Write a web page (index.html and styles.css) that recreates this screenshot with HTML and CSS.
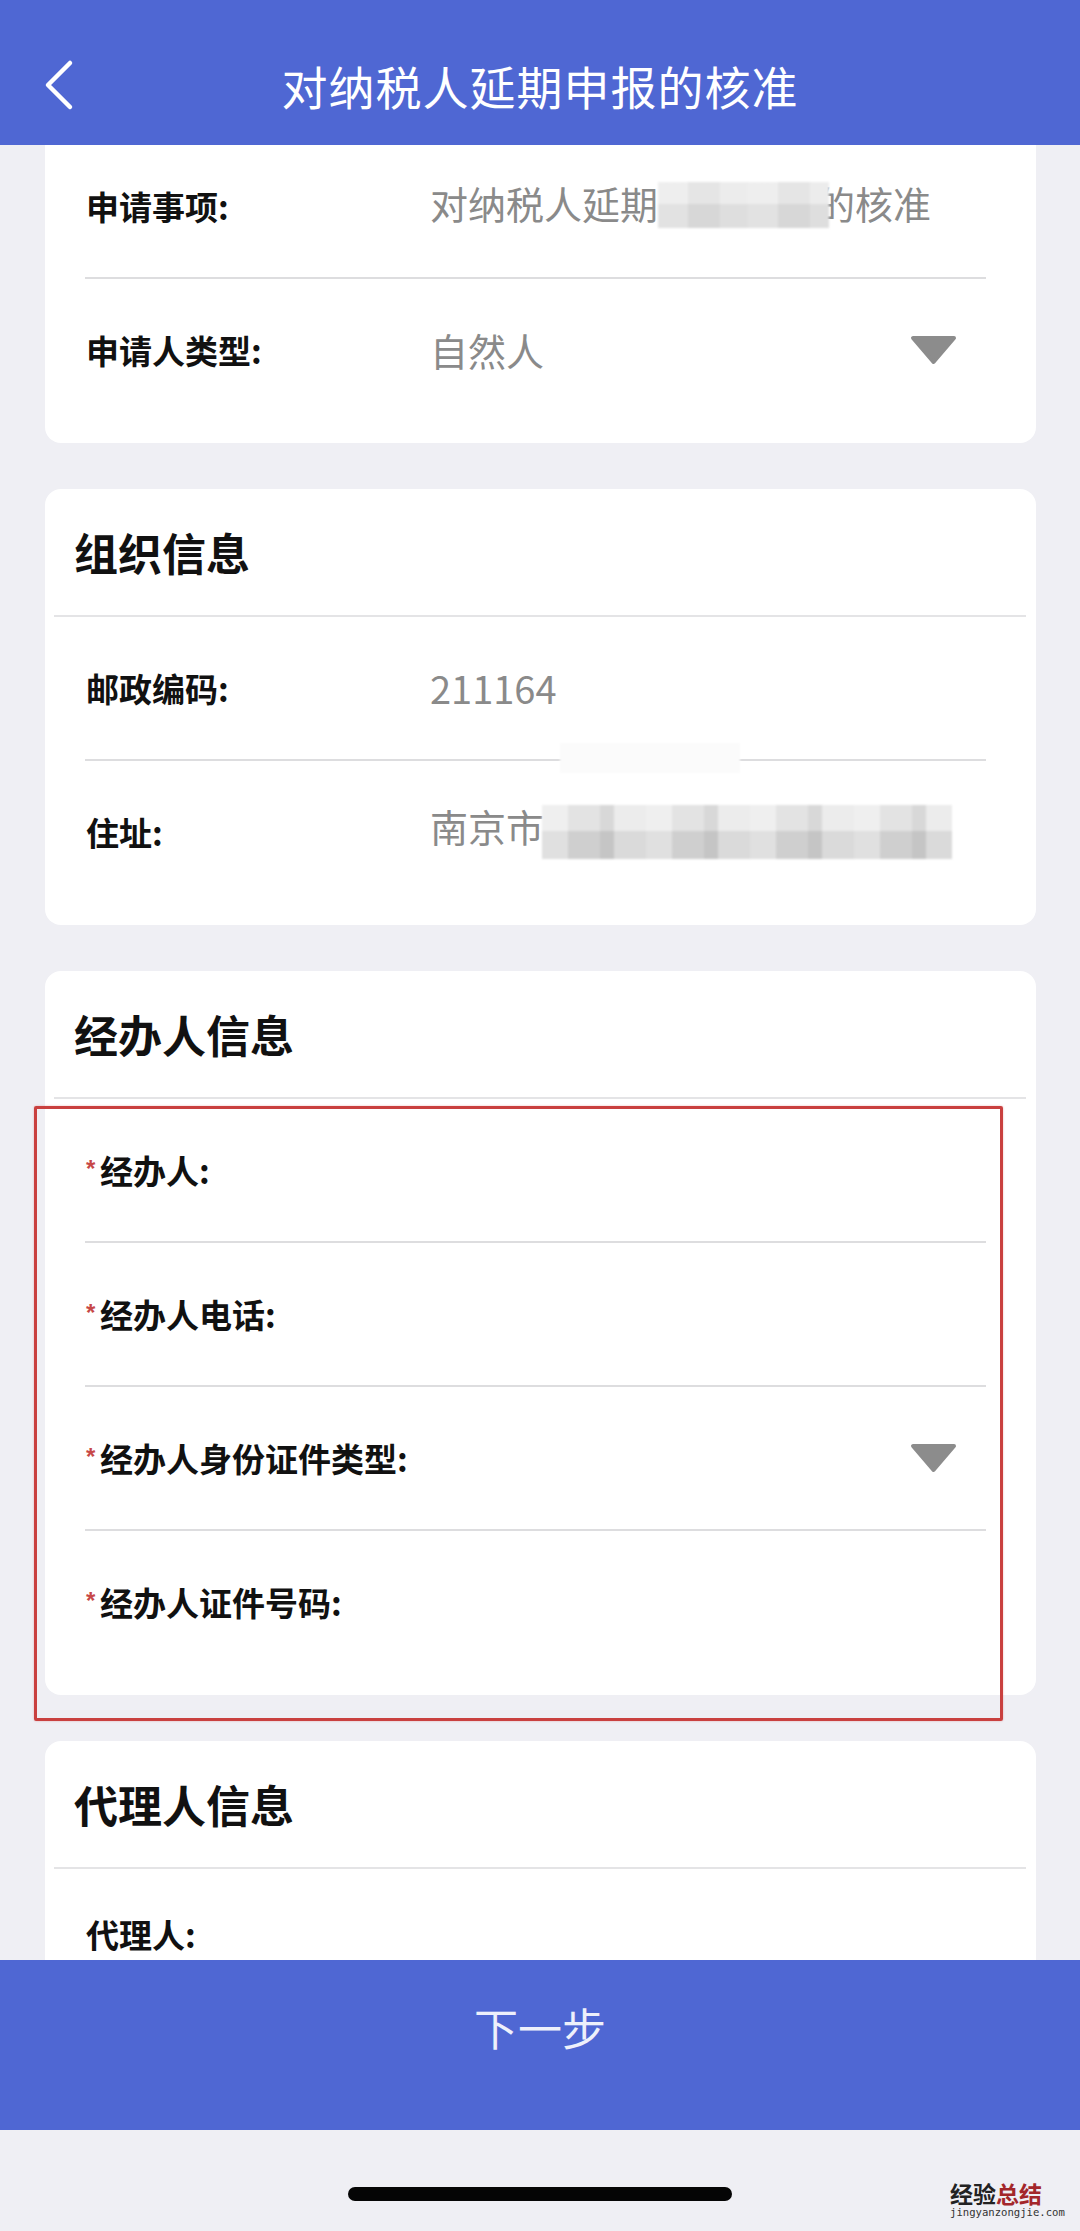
FILE: index.html
```html
<!DOCTYPE html>
<html lang="zh-CN">
<head>
<meta charset="utf-8">
<title>对纳税人延期申报的核准</title>
<link rel="stylesheet" href="styles.css">
</head>
<body>
<div class="screen">
  <header class="nav">
    <svg class="back" width="34" height="52" viewBox="0 0 34 52">
      <polyline points="27,4 5,26 27,48" fill="none" stroke="#ffffff" stroke-width="4.5" stroke-linecap="round" stroke-linejoin="round"/>
    </svg>
    <h1 class="nav-title">对纳税人延期申报的核准</h1>
    <span></span>
  </header>

  <main class="content">
    <section class="card card-first">
      <div class="field">
        <span class="label">申请事项:</span>
        <span class="value">对纳税人延期<span class="mask mask-item"></span>的核准</span>
      </div>
      <div class="field field-last">
        <span class="label">申请人类型:</span>
        <span class="value">自然人</span>
        <svg class="caret" width="47" height="30" viewBox="0 0 47 30"><polygon points="3,3 44,3 23.5,27" fill="#8c8c8c" stroke="#8c8c8c" stroke-width="4" stroke-linejoin="round"/></svg>
      </div>
    </section>

    <section class="card">
      <h2 class="card-head">组织信息</h2>
      <div class="field field-zip">
        <span class="label">邮政编码:</span>
        <span class="value">211164</span>
      </div>
      <div class="field field-last">
        <span class="label">住址:</span>
        <span class="value">南京市<span class="mask mask-addr"></span></span>
      </div>
    </section>

    <section class="card">
      <h2 class="card-head">经办人信息</h2>
      <div class="field">
        <span class="label"><span class="req">*</span>经办人:</span>
      </div>
      <div class="field">
        <span class="label"><span class="req">*</span>经办人电话:</span>
      </div>
      <div class="field">
        <span class="label label-wide"><span class="req">*</span>经办人身份证件类型:</span>
        <svg class="caret" width="47" height="30" viewBox="0 0 47 30"><polygon points="3,3 44,3 23.5,27" fill="#8c8c8c" stroke="#8c8c8c" stroke-width="4" stroke-linejoin="round"/></svg>
      </div>
      <div class="field field-last">
        <span class="label"><span class="req">*</span>经办人证件号码:</span>
      </div>
      <div class="highlight"></div>
    </section>

    <section class="card card-partial">
      <h2 class="card-head">代理人信息</h2>
      <div class="field field-agent">
        <span class="label">代理人:</span>
      </div>
    </section>
  </main>

  <footer class="action-bar">
    <span class="action-text">下一步</span>
  </footer>
  <div class="home-area">
    <div class="home-indicator"></div>
  </div>

  <div class="watermark">
    <div class="wm-cn"><span class="wm-dark">经验</span><span class="wm-red">总结</span></div>
    <div class="wm-en">jingyanzongjie.com</div>
  </div>
</div>
</body>
</html>
```

FILE: styles.css
```css
* { box-sizing: border-box; }

html, body {
  margin: 0;
  padding: 0;
}

body {
  width: 1080px;
  height: 2231px;
  overflow: hidden;
  background: #efeff4;
  font-family: "Noto Sans CJK SC", "Noto Sans", sans-serif;
  color: #111111;
}

.screen {
  position: relative;
  width: 1080px;
  height: 2231px;
  display: flex;
  flex-direction: column;
}

/* ---------- navigation bar ---------- */
.nav {
  flex: none;
  height: 145px;
  padding-top: 25px;
  background: #4f67d3;
  display: grid;
  grid-template-columns: 1fr auto 1fr;
  align-items: center;
}

.back {
  margin-left: 43px;
  display: block;
}

.nav-title {
  margin: 0;
  font-size: 46px;
  font-weight: 400;
  line-height: 1;
  color: #ffffff;
  letter-spacing: 1px;
}

/* ---------- content ---------- */
.content {
  flex: 1;
  min-height: 0;
  overflow: hidden;
}

.card {
  position: relative;
  background: #ffffff;
  border-radius: 16px;
  margin: 0 44px 46px 45px;
  padding-bottom: 22px;
}

.card-first {
  margin-top: -10px;
  border-top-left-radius: 0;
  border-top-right-radius: 0;
}

.card-partial {
  padding-bottom: 60px;
  border-bottom-left-radius: 0;
  border-bottom-right-radius: 0;
}

.card-head {
  margin: 0 10px 0 9px;
  height: 128px;
  padding-left: 20px;
  border-bottom: 2px solid #e4e4e6;
  display: flex;
  align-items: center;
  font-size: 44px;
  font-weight: 700;
  line-height: 1;
  color: #111111;
}

.field {
  margin: 0 50px 0 40px;
  height: 144px;
  border-bottom: 2px solid #dddddf;
  display: grid;
  grid-template-columns: 345px 1fr auto;
  align-items: center;
}

.field-last {
  border-bottom: none;
  height: 142px;
}

.field-agent {
  border-bottom: none;
  height: 90px;
  align-items: end;
  padding-bottom: 8px;
}

.label {
  grid-column: 1;
  padding-left: 1px;
  font-size: 33px;
  font-weight: 700;
  line-height: 1;
  color: #111111;
  white-space: nowrap;
}

.label-wide {
  grid-column: 1 / 3;
}

.req {
  display: inline-block;
  width: 14px;
  font-family: "Liberation Sans", sans-serif;
  font-size: 24px;
  font-weight: 700;
  color: #c74848;
  vertical-align: 7px;
}

.value {
  grid-column: 2;
  font-size: 38px;
  font-weight: 400;
  line-height: 1;
  color: #8a8a8a;
  white-space: nowrap;
}

.caret {
  grid-column: 3;
  display: block;
  margin-right: 29px;
}

/* mosaic privacy masks */
.mask {
  display: inline-block;
  vertical-align: middle;
  background-image:
    repeating-linear-gradient(90deg, rgba(255,255,255,0.18) 0 30px, rgba(0,0,0,0.025) 30px 62px, rgba(255,255,255,0.08) 62px 90px),
    linear-gradient(180deg, #ebebeb 0 48%, #dcdcdc 48% 100%);
  position: relative;
  z-index: 1;
}

.mask-item {
  width: 171px;
  height: 46px;
  margin-right: -12px;
  margin-top: -6px;
  filter: blur(1px);
}

.mask-addr {
  width: 410px;
  height: 54px;
  margin-left: -2px;
  filter: blur(1px);
  background-image:
    repeating-linear-gradient(90deg, rgba(255,255,255,0.25) 0 26px, rgba(0,0,0,0.03) 26px 58px, rgba(0,0,0,0.08) 58px 72px, rgba(255,255,255,0.1) 72px 104px),
    linear-gradient(180deg, #eaeaea 0 48%, #d6d6d6 48% 100%);
}

.mask-addr::before {
  content: "";
  position: absolute;
  left: 18px;
  top: -62px;
  width: 180px;
  height: 30px;
  background: #fbfbfb;
}

/* annotation box */
.highlight {
  position: absolute;
  top: 135px;
  left: -11px;
  width: 969px;
  height: 615px;
  border: 3px solid #c9403f;
  border-radius: 2px;
  box-shadow: 0 0 2px rgba(210, 80, 80, 0.45);
  pointer-events: none;
}

/* ---------- bottom ---------- */
.action-bar {
  flex: none;
  height: 170px;
  padding-bottom: 36px;
  background: #4f67d3;
  display: flex;
  align-items: center;
  justify-content: center;
}

.action-text {
  font-size: 44px;
  font-weight: 400;
  line-height: 1;
  color: #eef0fb;
}

.home-area {
  flex: none;
  height: 101px;
  padding-top: 57px;
  display: flex;
  justify-content: center;
  background: #efeff4;
}

.home-indicator {
  width: 384px;
  height: 14px;
  border-radius: 7px;
  background: #050505;
}

.watermark {
  position: absolute;
  right: 12px;
  bottom: 12px;
  width: 118px;
  text-align: left;
}

.wm-cn {
  font-size: 23px;
  font-weight: 700;
  line-height: 1;
  letter-spacing: 0;
}

.wm-dark { color: #222222; }
.wm-red { color: #a3262a; }

.wm-en {
  margin-top: 1px;
  font-family: "DejaVu Sans Mono", monospace;
  font-size: 10.6px;
  line-height: 13px;
  color: #333333;
}
```
